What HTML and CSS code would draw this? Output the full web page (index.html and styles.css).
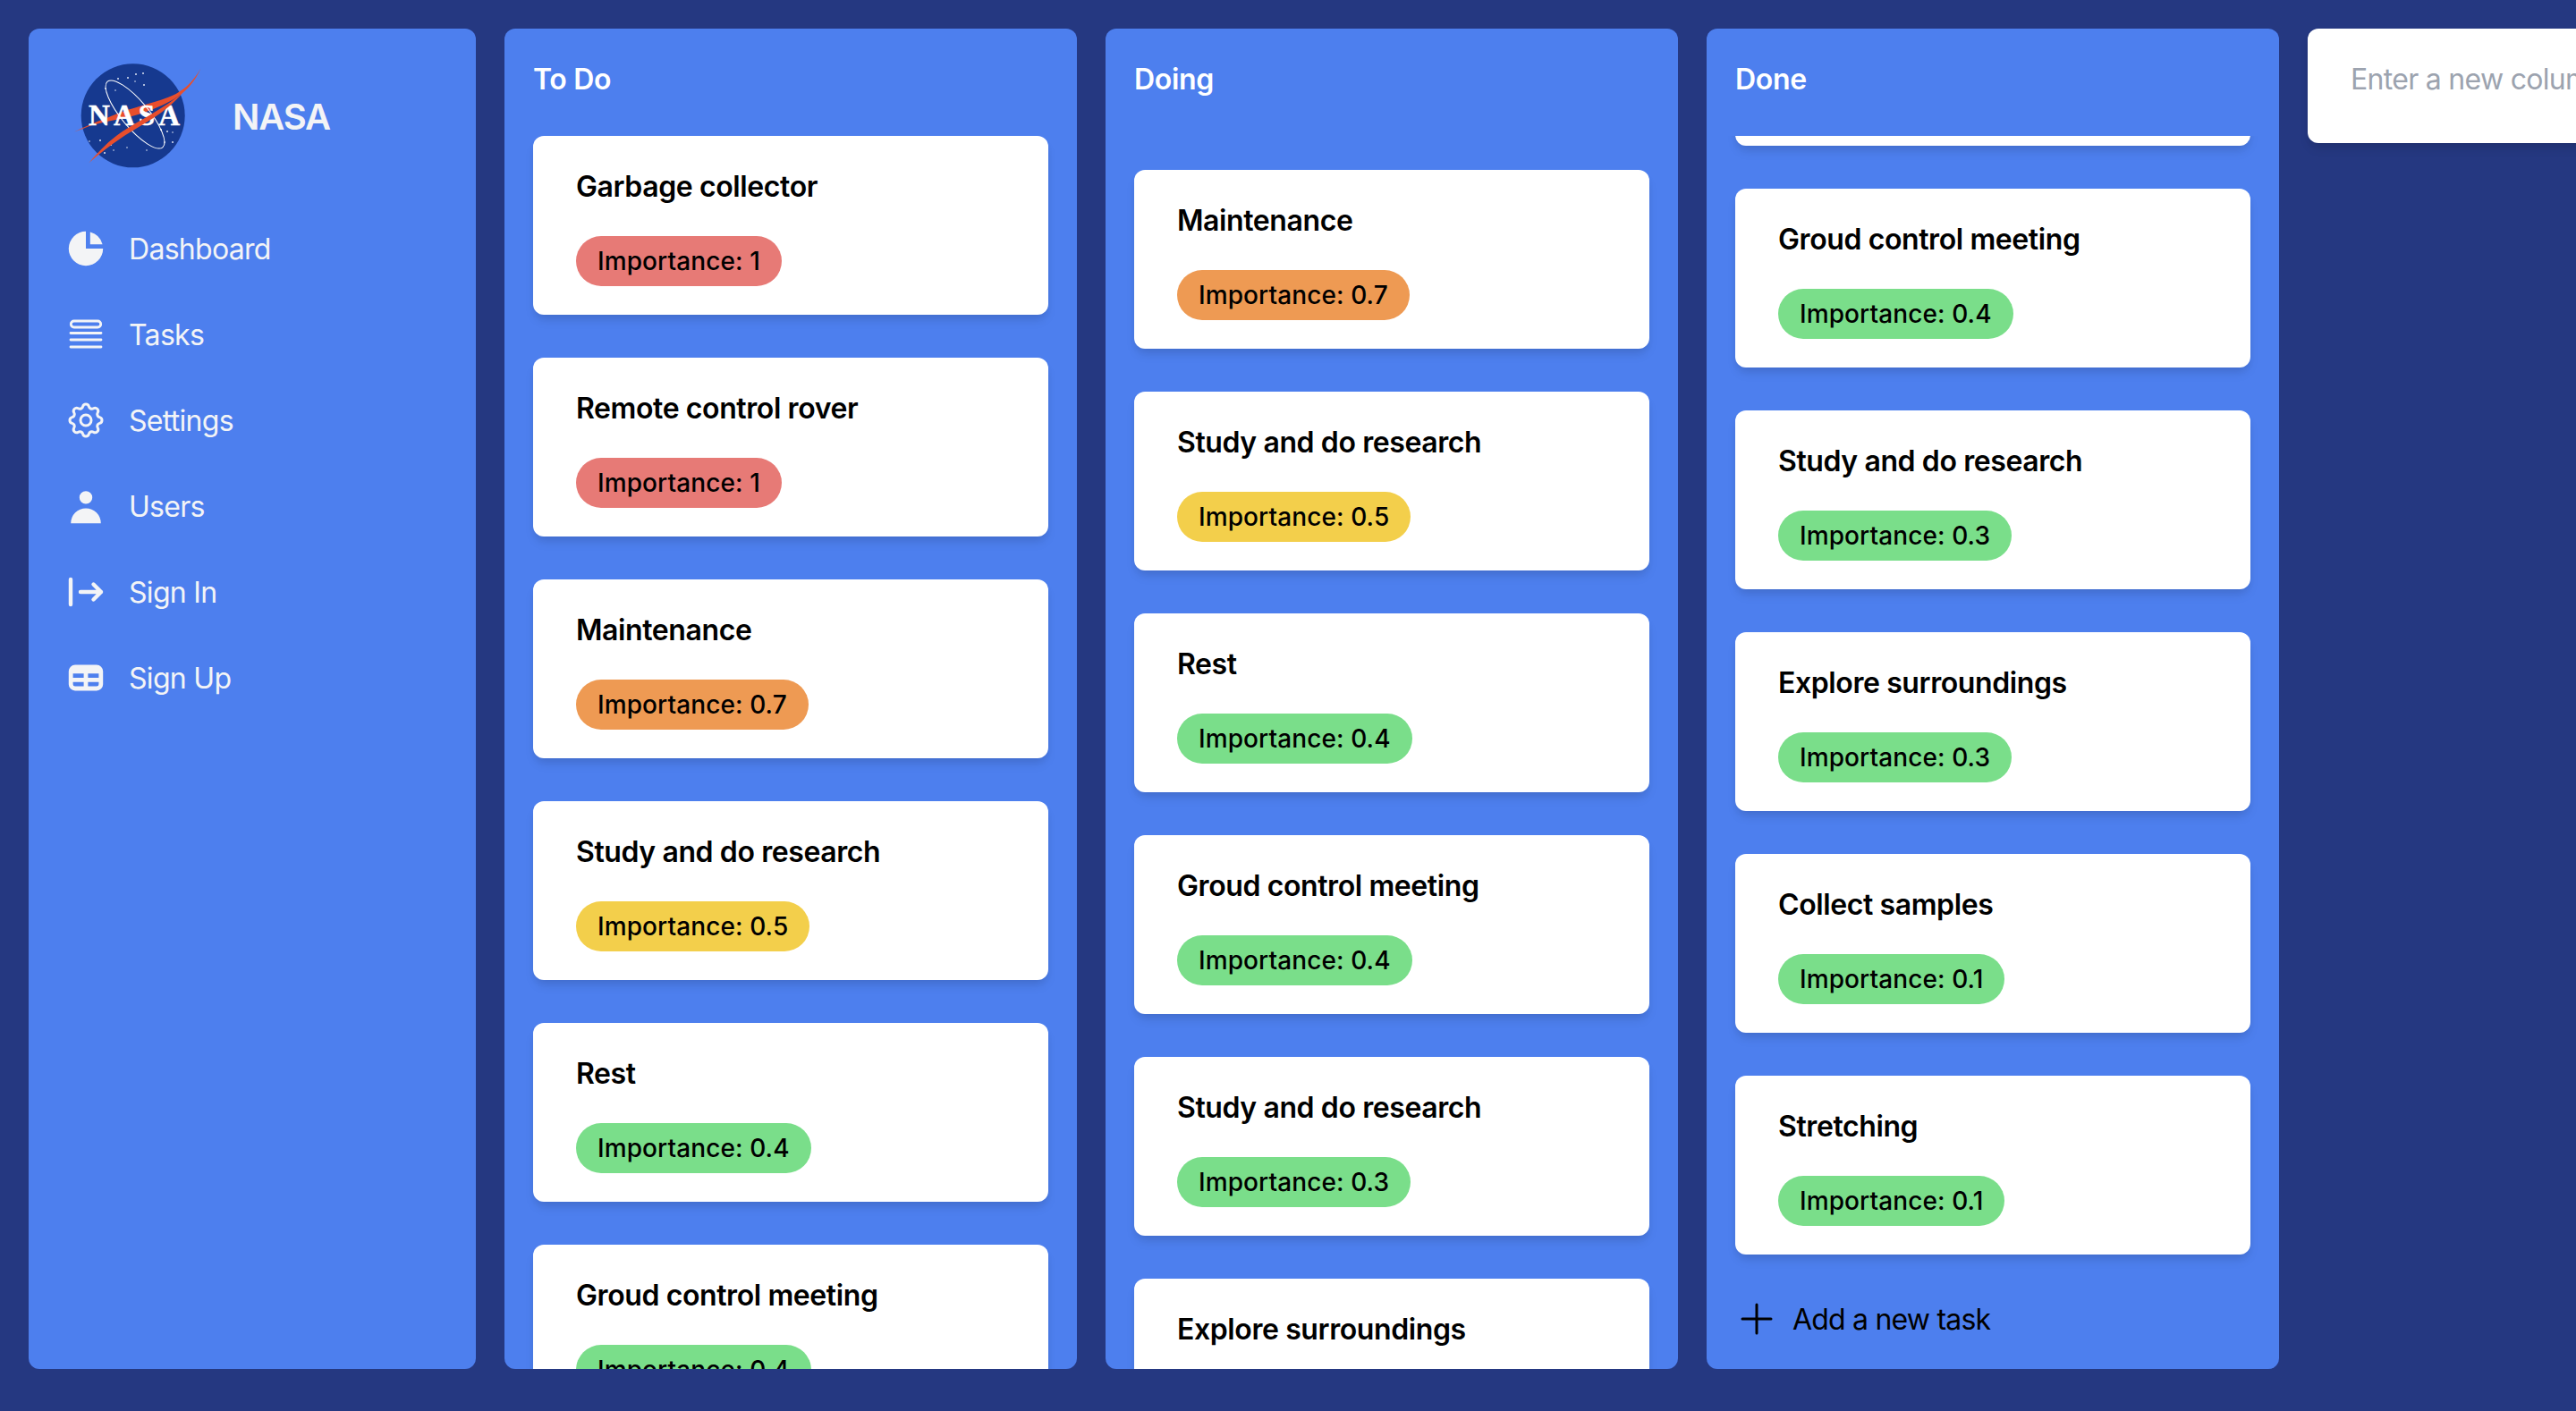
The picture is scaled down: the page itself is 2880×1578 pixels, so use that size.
FILE: index.html
```html
<!DOCTYPE html>
<html lang="en">

<head>
  <meta charset="UTF-8">
  <meta name="viewport" content="width=device-width, initial-scale=1.0">
  <title>NASA</title>

  <link rel="stylesheet" href="styles.css">
</head>

<body>
  <div class="board">

    <!-- sidebar -->
    <aside class="sidebar">
      <div class="brand">
        <svg class="brand-logo" viewBox="0 0 148 128">
          <circle cx="68.7" cy="64.3" r="58" fill="#16398f" />
          <g fill="#dfe6f5">
            <circle cx="63" cy="22" r="1" />
            <circle cx="72" cy="18" r="1" />
            <circle cx="80" cy="17" r="1" />
            <circle cx="52" cy="23" r="1" />
            <circle cx="71" cy="26" r="0.8" />
            <circle cx="81" cy="30" r="1" />
            <circle cx="49" cy="36" r="0.8" />
            <circle cx="38" cy="34" r="1" />
            <circle cx="107" cy="82" r="1" />
            <circle cx="113" cy="83" r="0.8" />
            <circle cx="100" cy="80" r="1" />
            <circle cx="104" cy="94" r="0.8" />
            <circle cx="113" cy="94" r="1" />
            <circle cx="44" cy="97" r="1" />
            <circle cx="32" cy="92" r="1" />
            <circle cx="20" cy="93" r="0.8" />
            <circle cx="37" cy="106" r="1" />
            <circle cx="62" cy="100" r="0.8" />
            <circle cx="84" cy="103" r="0.8" />
            <circle cx="47" cy="103" r="0.8" />
          </g>
          <path d="M144.3 11.700C135 28 125 35 116.700 40C105 46 95 48 83.300 51.700C65 57 50 62 40 66.700C25 72 12 78 3.300 82.300C10 80 15 78 23 75C45 69 65 67 83.300 60C110 50 132 40 144.300 11.700Z" fill="#e84e2c" />
          <text class="brand-logo-text" x="19" y="75" textLength="102" lengthAdjust="spacing">NASA</text>
          <ellipse cx="71" cy="63" rx="48" ry="15" transform="rotate(50 71 63)" fill="none" stroke="#fff" stroke-width="1" />
          <path d="M124 39C95 62 70 72 50 87C38 96 28 107 19.300 117.300C32 106 44 97 56 89C80 73 105 62 124 39Z" fill="#e84e2c" />
        </svg>
        <span class="brand-name">NASA</span>
      </div>

      <ul class="nav">
        <li class="nav-item">
          <svg class="nav-icon" viewBox="0 0 20 20" fill="currentColor">
            <path d="M2 10a8 8 0 018-8v8h8a8 8 0 11-16 0z" />
            <path d="M12 2.252A8.014 8.014 0 0117.748 8H12V2.252z" />
          </svg>
          <span class="nav-label">Dashboard</span>
        </li>
        <li class="nav-item">
          <svg class="nav-icon" viewBox="0 0 48 48" fill="none" stroke="currentColor" stroke-width="2.8" stroke-linecap="round">
            <rect x="7.300" y="9" width="33.400" height="7" rx="3.500" />
            <path d="M7 22.500H41M7 30H41M7 38H41" />
          </svg>
          <span class="nav-label">Tasks</span>
        </li>
        <li class="nav-item">
          <svg class="nav-icon" viewBox="0 0 24 24" fill="none" stroke="currentColor" stroke-width="1.5" stroke-linecap="round" stroke-linejoin="round">
            <path d="M10.325 4.317c.426-1.756 2.924-1.756 3.35 0a1.724 1.724 0 002.573 1.066c1.543-.94 3.31.826 2.37 2.37a1.724 1.724 0 001.065 2.572c1.756.426 1.756 2.924 0 3.35a1.724 1.724 0 00-1.066 2.573c.94 1.543-.826 3.31-2.37 2.37a1.724 1.724 0 00-2.572 1.065c-.426 1.756-2.924 1.756-3.35 0a1.724 1.724 0 00-2.573-1.066c-1.543.94-3.31-.826-2.37-2.37a1.724 1.724 0 00-1.065-2.572c-1.756-.426-1.756-2.924 0-3.35a1.724 1.724 0 001.066-2.573c-.94-1.543.826-3.31 2.37-2.37.996.608 2.296.07 2.572-1.065z" />
            <path d="M15 12a3 3 0 11-6 0 3 3 0 016 0z" />
          </svg>
          <span class="nav-label">Settings</span>
        </li>
        <li class="nav-item">
          <svg class="nav-icon" viewBox="0 0 20 20" fill="currentColor">
            <path d="M10 9a3 3 0 100-6 3 3 0 000 6zm-7 9a7 7 0 1114 0H3z" />
          </svg>
          <span class="nav-label">Users</span>
        </li>
        <li class="nav-item">
          <svg class="nav-icon" viewBox="0 0 48 48" fill="none" stroke="currentColor" stroke-width="4.400" stroke-linecap="round" stroke-linejoin="round">
            <path d="M7 10V38" />
            <path d="M18 24H41M32.500 15.500L41 24L32.500 32.500" />
          </svg>
          <span class="nav-label">Sign In</span>
        </li>
        <li class="nav-item">
          <svg class="nav-icon" viewBox="0 0 20 20" fill="currentColor">
            <path fill-rule="evenodd" d="M5 4a3 3 0 00-3 3v6a3 3 0 003 3h10a3 3 0 003-3V7a3 3 0 00-3-3H5zm-1 9v-1h5v2H5a1 1 0 01-1-1zm7 1h4a1 1 0 001-1v-1h-5v2zm0-4h5V8h-5v2zM9 8H4v2h5V8z" clip-rule="evenodd" />
          </svg>
          <span class="nav-label">Sign Up</span>
        </li>
      </ul>
    </aside>

    <!-- to do -->
    <section class="column">
      <h2 class="column-title">To Do</h2>
      <div class="task-list">
        <div class="task">
          <h3 class="task-title">Garbage collector</h3>
          <span class="badge badge-red">Importance: 1</span>
        </div>
        <div class="task">
          <h3 class="task-title">Remote control rover</h3>
          <span class="badge badge-red">Importance: 1</span>
        </div>
        <div class="task">
          <h3 class="task-title">Maintenance</h3>
          <span class="badge badge-orange">Importance: 0.7</span>
        </div>
        <div class="task">
          <h3 class="task-title">Study and do research</h3>
          <span class="badge badge-yellow">Importance: 0.5</span>
        </div>
        <div class="task">
          <h3 class="task-title">Rest</h3>
          <span class="badge badge-green">Importance: 0.4</span>
        </div>
        <div class="task">
          <h3 class="task-title">Groud control meeting</h3>
          <span class="badge badge-green">Importance: 0.4</span>
        </div>
      </div>
    </section>

    <!-- doing -->
    <section class="column">
      <h2 class="column-title">Doing</h2>
      <div class="task-list task-list-doing">
        <div class="task">
          <h3 class="task-title">Maintenance</h3>
          <span class="badge badge-orange">Importance: 0.7</span>
        </div>
        <div class="task">
          <h3 class="task-title">Study and do research</h3>
          <span class="badge badge-yellow">Importance: 0.5</span>
        </div>
        <div class="task">
          <h3 class="task-title">Rest</h3>
          <span class="badge badge-green">Importance: 0.4</span>
        </div>
        <div class="task">
          <h3 class="task-title">Groud control meeting</h3>
          <span class="badge badge-green">Importance: 0.4</span>
        </div>
        <div class="task">
          <h3 class="task-title">Study and do research</h3>
          <span class="badge badge-green">Importance: 0.3</span>
        </div>
        <div class="task">
          <h3 class="task-title">Explore surroundings</h3>
        </div>
      </div>
    </section>

    <!-- done, list is scrolled a bit so the first card is cut off -->
    <section class="column">
      <h2 class="column-title">Done</h2>
      <div class="task-list">
        <div class="task task-scrolled"></div>
        <div class="task">
          <h3 class="task-title">Groud control meeting</h3>
          <span class="badge badge-green">Importance: 0.4</span>
        </div>
        <div class="task">
          <h3 class="task-title">Study and do research</h3>
          <span class="badge badge-green">Importance: 0.3</span>
        </div>
        <div class="task">
          <h3 class="task-title">Explore surroundings</h3>
          <span class="badge badge-green">Importance: 0.3</span>
        </div>
        <div class="task">
          <h3 class="task-title">Collect samples</h3>
          <span class="badge badge-green">Importance: 0.1</span>
        </div>
        <div class="task">
          <h3 class="task-title">Stretching</h3>
          <span class="badge badge-green">Importance: 0.1</span>
        </div>
      </div>
      <div class="add-task">
        <svg class="add-icon" viewBox="0 0 24 24" fill="none" stroke="currentColor" stroke-width="1.5" stroke-linecap="round">
          <path d="M12 4v16M4 12h16" />
        </svg>
        <span class="add-label">Add a new task</span>
      </div>
    </section>

    <input class="new-column" type="text" placeholder="Enter a new column">

  </div>
</body>

</html>
```

FILE: styles.css
```css
* {
  margin: 0;
  padding: 0;
  box-sizing: border-box;
}

html,
body {
  height: 100%;
  overflow: hidden;
}

body {
  background: #253881;
  font-family: Inter, "Liberation Sans", sans-serif;
  font-size: 32px;
  line-height: 48px;
  color: #000;
}

.board {
  display: flex;
  align-items: flex-start;
  gap: 32px;
  width: 3400px;
  padding: 32px;
}

/* sidebar */
.sidebar {
  flex: none;
  width: 500px;
  height: 1499px;
  padding: 33px 40px 0;
  background: #4d7fee;
  border-radius: 12px;
  color: #f3f4f6;
}

.brand {
  display: flex;
  align-items: center;
  gap: 32px;
  margin-left: 8px;
}

.brand-logo {
  flex: none;
  width: 148px;
  height: 128px;
}

.brand-logo-text {
  font-family: "Liberation Serif", serif;
  font-size: 33px;
  font-weight: 700;
  fill: #fff;
  stroke: #fff;
  stroke-width: 0.5;
}

.brand-name {
  padding-top: 4px;
  font-size: 40px;
  line-height: 60px;
  font-weight: 600;
  letter-spacing: -1.2px;
}

.nav {
  list-style: none;
  margin-top: 37px;
}

.nav-item {
  display: flex;
  align-items: center;
  gap: 24px;
  height: 96px;
}

.nav-icon {
  flex: none;
  width: 48px;
  height: 48px;
}

.nav-label {
  padding-top: 2px;
  letter-spacing: -0.7px;
}

/* columns */
.column {
  flex: none;
  display: flex;
  flex-direction: column;
  width: 640px;
  height: 1499px;
  background: #4d7fee;
  border-radius: 12px;
  overflow: hidden;
}

.column-title {
  padding: 33px 32px 39px;
  font-size: 32px;
  line-height: 48px;
  font-weight: 600;
  letter-spacing: -0.3px;
  color: #fff;
}

.task-list {
  flex: 1;
  min-height: 0;
  padding: 0 32px;
  overflow: hidden;
}

.task-list-doing {
  padding-top: 38px;
}

.task {
  height: 200px;
  margin-bottom: 48px;
  padding: 33px 48px 32px;
  background: #fff;
  border-radius: 12px;
  box-shadow: 0 8px 12px -2px rgba(0, 0, 0, 0.1), 0 4px 8px -2px rgba(0, 0, 0, 0.06);
}

.task-scrolled {
  margin-top: -189px;
}

.task-title {
  margin-bottom: 31px;
  font-size: 32px;
  line-height: 48px;
  font-weight: 600;
  letter-spacing: -0.4px;
}

.badge {
  display: inline-block;
  height: 56px;
  padding: 8px 24px;
  border-radius: 28px;
  font-size: 28px;
  line-height: 40px;
  font-weight: 500;
  letter-spacing: 0.1px;
  vertical-align: top;
}

.badge-red {
  background: #e77a76;
}

.badge-orange {
  background: #ee9a53;
}

.badge-yellow {
  background: #f3cf4b;
}

.badge-green {
  background: #7ade8a;
}

.add-task {
  display: flex;
  align-items: center;
  gap: 16px;
  height: 48px;
  margin: 0 32px 32px;
  color: #000;
}

.add-icon {
  flex: none;
  width: 48px;
  height: 48px;
}

.add-label {
  padding-top: 2px;
  letter-spacing: -0.8px;
}

/* new column input */
.new-column {
  flex: none;
  width: 640px;
  height: 128px;
  padding: 0 48px 16px;
  background: #fff;
  border: 0;
  border-radius: 12px;
  box-shadow: 0 8px 12px -2px rgba(0, 0, 0, 0.1), 0 4px 8px -2px rgba(0, 0, 0, 0.06);
  font-family: inherit;
  font-size: 32px;
  font-weight: 400;
  letter-spacing: -0.7px;
  outline: none;
}

.new-column::placeholder {
  color: #9ca3af;
}
```
